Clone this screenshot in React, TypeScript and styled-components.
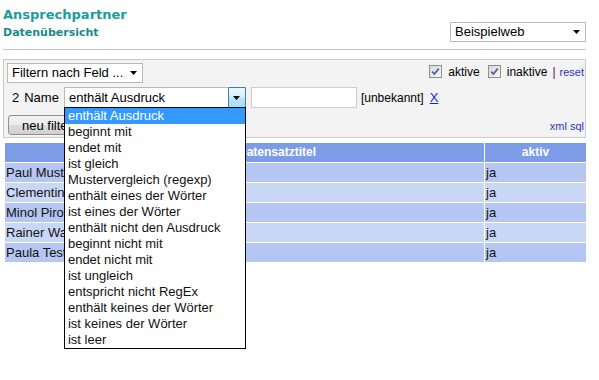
import React from 'react';
import styled, { createGlobalStyle } from 'styled-components';

const GlobalStyle = createGlobalStyle`
  html, body { margin: 0; padding: 0; background: #fff; }
  body {
    font-family: "Liberation Sans", Arial, sans-serif;
    font-size: 13px;
    color: #000;
  }
`;

const Page = styled.div`
  width: 583px;
  min-height: 380px;
  margin-left: 3px;
`;

const Header = styled.header`
  height: 49px;
  box-sizing: border-box;
  padding-top: 7px;
  display: flex;
  justify-content: space-between;
  align-items: flex-start;
`;

const Titles = styled.div`
  display: flex;
  flex-direction: column;
  gap: 3px;
`;

const Title = styled.h1`
  margin: 0;
  font: bold 13px/16px "DejaVu Sans", Verdana, sans-serif;
  color: #1a9d9d;
`;

const Subtitle = styled.h2`
  margin: 0;
  font: bold 11px/14px "DejaVu Sans", Verdana, sans-serif;
  color: #178b8b;
`;

const Rule = styled.hr`
  margin: 0;
  border: 0;
  border-top: 1px solid #c4c4c4;
  height: 0;
`;

const SelectBox = styled.div<{ $width: number; $height: number; $top?: number }>`
  position: relative;
  box-sizing: border-box;
  width: ${p => p.$width}px;
  height: ${p => p.$height}px;
  margin-top: ${p => p.$top ?? 0}px;
  border: 1px solid #b9b9b9;
  background: #fff;
  display: flex;
  align-items: center;
  font-size: 13px;
  line-height: 16px;
  padding-left: 4px;
  flex-shrink: 0;
`;

const SelectText = styled.span`
  flex: 1;
  white-space: nowrap;
  overflow: hidden;
`;

const ArrowSlot = styled.span`
  width: 17px;
  height: 100%;
  display: flex;
  align-items: center;
  justify-content: center;
`;

const ArrowButton = styled.span`
  box-sizing: border-box;
  width: 18px;
  height: calc(100% + 2px);
  margin: -1px -1px -1px 0;
  border: 1px solid #3c7fb1;
  border-radius: 1px;
  background: linear-gradient(#eaf6fd, #d7effc 45%, #bce4fa 55%, #a7d9f5);
  display: flex;
  align-items: center;
  justify-content: center;
`;

const Triangle = () => (
  <svg width="7" height="4" viewBox="0 0 7 4">
    <polygon points="0,0 7,0 3.5,4" fill="#000" />
  </svg>
);

const Panel = styled.section`
  margin-top: 9px;
  border: 1px solid #cacaca;
  background: #f3f3f3;
  padding: 3px 1px 2px 3px;
`;

const Row = styled.div<{ $top?: number; $height: number }>`
  display: flex;
  align-items: center;
  margin-top: ${p => p.$top ?? 0}px;
  height: ${p => p.$height}px;
`;

const Checks = styled.div`
  margin-left: auto;
  display: flex;
  align-items: center;
  font-size: 12px;
  line-height: 14px;
  margin-top: -3px;
`;

const Check = styled.span`
  box-sizing: border-box;
  width: 13px;
  height: 13px;
  border: 1px solid #8e8f8f;
  background: linear-gradient(135deg, #d8d8d8, #f7f7f7);
  display: inline-flex;
  align-items: center;
  justify-content: center;
  margin-right: 6px;
`;

const CheckLabel = styled.span<{ $gap?: number }>`
  margin-right: ${p => p.$gap ?? 0}px;
`;

const Sep = styled.span`
  color: #800060;
  margin: 0 4px 0 5px;
`;

const SmallLink = styled.a`
  font-size: 11px;
  color: #3131c8;
  text-decoration: none;
`;

const Label = styled.span<{ $left?: number; $right?: number }>`
  margin-left: ${p => p.$left ?? 0}px;
  margin-right: ${p => p.$right ?? 0}px;
  white-space: nowrap;
`;

const TextInput = styled.input`
  box-sizing: border-box;
  width: 106px;
  height: 21px;
  margin-left: 5px;
  border: 1px solid #cdcdcd;
  background: #fff;
  padding: 0 3px;
  font: 13px "Liberation Sans", Arial, sans-serif;
`;

const Note = styled.span`
  font-size: 12px;
  margin-left: 4px;
`;

const RemoveLink = styled.a`
  margin-left: 6px;
  font-size: 13px;
  color: #1b1bd6;
  text-decoration: underline;
`;

const Button = styled.button`
  margin-left: 1px;
  height: 20px;
  box-sizing: border-box;
  padding: 0 13px;
  border: 1px solid #8e8f8f;
  border-radius: 3px;
  background: linear-gradient(#f2f2f2, #ebebeb 50%, #dddddd 50%, #cfcfcf);
  font: 13px "Liberation Sans", Arial, sans-serif;
  color: #000;
`;

const ExportLinks = styled.div`
  margin-left: auto;
  display: flex;
  gap: 3px;
  padding-top: 2px;
`;

const DropList = styled.ul`
  position: absolute;
  left: -1px;
  top: 100%;
  z-index: 10;
  box-sizing: border-box;
  width: 182px;
  margin: 0;
  padding: 0;
  list-style: none;
  background: #fff;
  border: 1px solid #000;
`;

const DropItem = styled.li<{ $active?: boolean }>`
  height: 16px;
  line-height: 16px;
  padding-left: 3px;
  font-size: 13px;
  white-space: nowrap;
  background: ${p => (p.$active ? '#3399ff' : '#fff')};
  color: ${p => (p.$active ? '#fff' : '#111')};
`;

const Table = styled.table`
  margin: 4px 0 0 1px;
  width: 583px;
  border-collapse: separate;
  border-spacing: 1px;
  table-layout: fixed;
`;

const Th = styled.th`
  height: 19px;
  padding: 0;
  background: #7c9ce8;
  color: #fff;
  font-size: 12px;
  font-weight: bold;
  text-align: center;
  line-height: 19px;
`;

const Td = styled.td<{ $even: boolean }>`
  height: 19px;
  padding: 0 0 0 1px;
  line-height: 19px;
  font-size: 13px;
  color: #111;
  white-space: nowrap;
  overflow: hidden;
  background: ${p => (p.$even ? '#c9d7f6' : '#b4c6f1')};
`;

const operators = [
  'enthält Ausdruck',
  'beginnt mit',
  'endet mit',
  'ist gleich',
  'Mustervergleich (regexp)',
  'enthält eines der Wörter',
  'ist eines der Wörter',
  'enthält nicht den Ausdruck',
  'beginnt nicht mit',
  'endet nicht mit',
  'ist ungleich',
  'entspricht nicht RegEx',
  'enthält keines der Wörter',
  'ist keines der Wörter',
  'ist leer',
];

const people = ['Paul Mustermann', 'Clementine Kruse', 'Minol Pirol', 'Rainer Wahnsinn', 'Paula Test'];

const CheckMark = () => (
  <svg width="9" height="9" viewBox="0 0 9 9">
    <path d="M1.2 4.6 L3.4 7 L7.8 1.6" fill="none" stroke="#4a6593" strokeWidth="1.7" />
  </svg>
);

export default function App() {
  return (
    <>
      <GlobalStyle />
      <Page>
        <Header>
          <Titles>
            <Title>Ansprechpartner</Title>
            <Subtitle>Datenübersicht</Subtitle>
          </Titles>
          <SelectBox $width={136} $height={20} $top={15}>
            <SelectText>Beispielweb</SelectText>
            <ArrowSlot><Triangle /></ArrowSlot>
          </SelectBox>
        </Header>
        <Rule />
        <Panel>
          <Row $height={20}>
            <SelectBox $width={136} $height={20}>
              <SelectText>Filtern nach Feld ...</SelectText>
              <ArrowSlot><Triangle /></ArrowSlot>
            </SelectBox>
            <Checks>
              <Check><CheckMark /></Check>
              <CheckLabel $gap={8}>aktive</CheckLabel>
              <Check><CheckMark /></Check>
              <CheckLabel>inaktive</CheckLabel>
              <Sep>|</Sep>
              <SmallLink href="#">reset</SmallLink>
            </Checks>
          </Row>
          <Row $top={4} $height={21}>
            <Label $left={5}>2</Label>
            <Label $left={5} $right={5}>Name</Label>
            <SelectBox $width={182} $height={21}>
              <SelectText>enthält Ausdruck</SelectText>
              <ArrowButton><Triangle /></ArrowButton>
              <DropList>
                {operators.map((o, i) => (
                  <DropItem key={o} $active={i === 0}>{o}</DropItem>
                ))}
              </DropList>
            </SelectBox>
            <TextInput defaultValue="" />
            <Note>[unbekannt]</Note>
            <RemoveLink href="#">X</RemoveLink>
          </Row>
          <Row $top={7} $height={20}>
            <Button>neu filter</Button>
            <ExportLinks>
              <SmallLink href="#">xml</SmallLink>
              <SmallLink href="#">sql</SmallLink>
            </ExportLinks>
          </Row>
        </Panel>
        <Table>
          <colgroup>
            <col style={{ width: 64 }} />
            <col style={{ width: 414 }} />
            <col style={{ width: 101 }} />
          </colgroup>
          <thead>
            <tr>
              <Th></Th>
              <Th>Datensatztitel</Th>
              <Th>aktiv</Th>
            </tr>
          </thead>
          <tbody>
            {people.map((p, i) => (
              <tr key={p}>
                <Td $even={i % 2 === 1}>{p}</Td>
                <Td $even={i % 2 === 1}></Td>
                <Td $even={i % 2 === 1}>ja</Td>
              </tr>
            ))}
          </tbody>
        </Table>
      </Page>
    </>
  );
}
